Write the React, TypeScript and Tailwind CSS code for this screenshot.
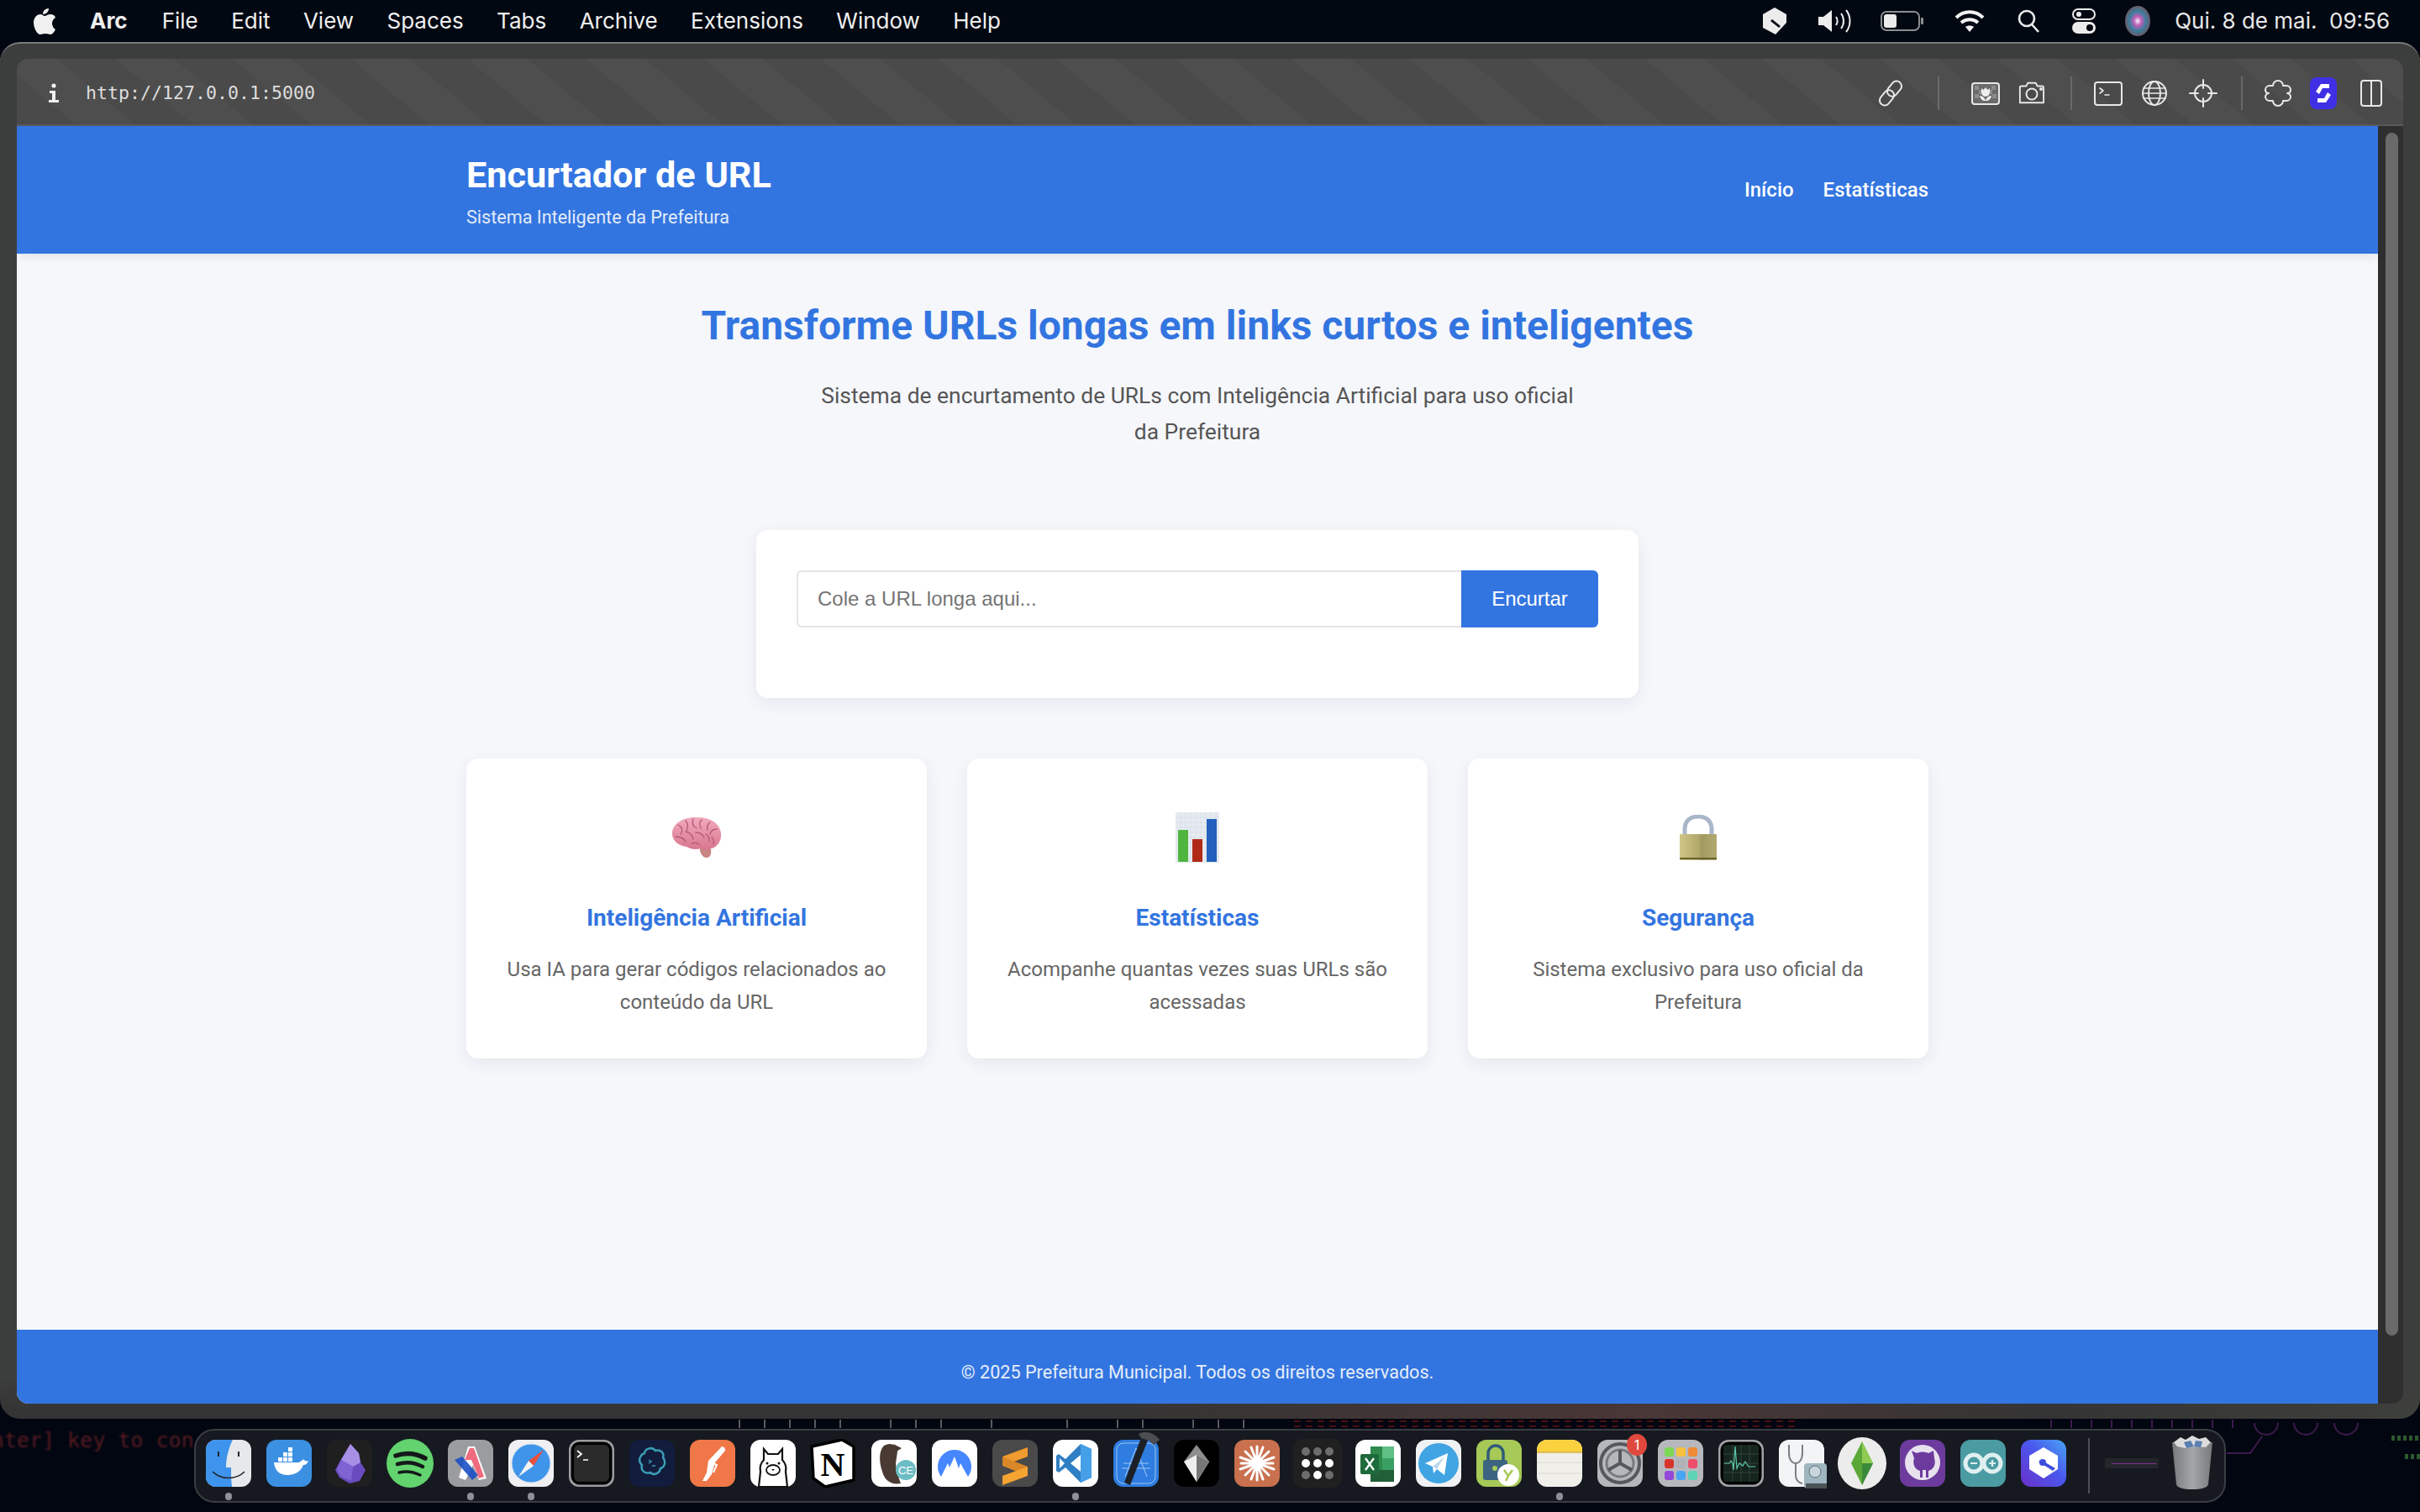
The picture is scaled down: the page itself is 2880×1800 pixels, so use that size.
import type { ReactNode } from "react";

const menuItems = ["File", "Edit", "View", "Spaces", "Tabs", "Archive", "Extensions", "Window", "Help"];

const features = [
  { title: "Inteligência Artificial", text: ["Usa IA para gerar códigos relacionados ao", "conteúdo da URL"], icon: <BrainEmoji /> },
  { title: "Estatísticas", text: ["Acompanhe quantas vezes suas URLs são", "acessadas"], icon: <ChartEmoji /> },
  { title: "Segurança", text: ["Sistema exclusivo para uso oficial da", "Prefeitura"], icon: <LockEmoji /> },
];

function BrainEmoji() {
  return (
    <svg width="60" height="50" viewBox="0 0 60 50">
      <defs>
        <linearGradient id="brainFill" x1="0" x2="0" y1="0" y2="1">
          <stop offset="0" stopColor="#f3aabd" />
          <stop offset="1" stopColor="#d8778f" />
        </linearGradient>
      </defs>
      <path d="M34 36c-1 7 3 13 8 13 4 0 6-4 5-10l-3-6z" fill="#c98484" />
      <path d="M1 22C0 10 12 1 28 1c16-1 30 6 31 19 1 11-6 18-15 19-4 1-7 0-9-1-6 2-12 1-17-2C10 35 2 30 1 22z" fill="url(#brainFill)" />
      <g fill="none" stroke="#b25a76" strokeWidth="1.3" strokeLinecap="round">
        <path d="M8 10c5 2 6 7 3 11M17 5c3 4 3 8 1 12M26 3c-2 5 0 9 4 11M36 4c-3 3-3 6-1 10M46 7c-3 2-4 5-3 9M54 15c-4 0-7 2-8 6" />
        <path d="M5 24c6 0 10 2 12 6M17 18c5 1 8 4 9 9M29 19c5 0 8 2 10 6M41 21c3 2 5 5 4 9M24 32c3-1 6-1 9 1M48 24c2 3 3 6 2 9" />
      </g>
    </svg>
  );
}

function ChartEmoji() {
  return (
    <svg width="52" height="60" viewBox="0 0 52 60">
      <rect width="52" height="60" fill="#e6ebf1" />
      <path d="M0 6H52M0 12H52M0 18H52M0 24H52M0 30H52M0 36H52M0 42H52M0 48H52M0 54H52M6 0V60M12 0V60M18 0V60M24 0V60M30 0V60M36 0V60M42 0V60M48 0V60" stroke="#d5dce5" strokeWidth="0.7" />
      <rect x="3" y="21" width="12" height="38" fill="#4fb53f" />
      <rect x="20" y="32" width="12" height="27" fill="#b12a18" />
      <rect x="37" y="8" width="12" height="51" fill="#2360bd" />
    </svg>
  );
}

function LockEmoji() {
  return (
    <svg width="44" height="54" viewBox="0 0 44 54">
      <defs>
        <linearGradient id="lockBody" x1="0" x2="1" y1="0" y2="0">
          <stop offset="0" stopColor="#cfc686" />
          <stop offset="0.5" stopColor="#b3a96d" />
          <stop offset="0.6" stopColor="#a39a62" />
          <stop offset="1" stopColor="#b2a96f" />
        </linearGradient>
      </defs>
      <path d="M6 25V17C6 7 13 2 22 2s16 5 16 15v8" fill="none" stroke="#a9b6c9" strokeWidth="5" />
      <rect y="23" width="44" height="31" rx="1" fill="url(#lockBody)" />
      <rect y="51" width="44" height="2" fill="#6c6330" />
    </svg>
  );
}

function MenuRightIcons() {
  return (
    <div className="flex items-center">
      <svg width="28" height="32" viewBox="0 0 28 32">
        <path d="M14 0l14 8v10L15 32 0 24V8z" fill="#ececec" />
        <path d="M11 14l10 8-2 2-10-8z" fill="#020812" />
      </svg>
      <svg width="40" height="28" viewBox="0 0 40 28" className="ml-[38px]" fill="none" stroke="#ececec" strokeWidth="2">
        <path d="M0 9h6l10-8v26l-10-8H0z" fill="#ececec" stroke="none" />
        <path d="M21 9c2 3 2 7 0 10M27 5c4 5 4 13 0 18M33 1c6 7 6 19 0 26" />
      </svg>
      <svg width="52" height="24" viewBox="0 0 52 24" className="ml-[34px]">
        <rect x="1" y="1" width="45" height="22" rx="6" fill="none" stroke="#8b8d91" strokeWidth="2" />
        <rect x="4" y="4" width="15" height="16" rx="3" fill="#ececec" />
        <rect x="48" y="8" width="3" height="8" rx="1" fill="#8b8d91" />
      </svg>
      <svg width="36" height="26" viewBox="0 0 36 26" className="ml-[36px]" fill="none" stroke="#f2f2f2" strokeWidth="4">
        <path d="M2 9c9-9 23-9 32 0M8 15c6-5 14-5 20 0" />
        <path d="M18 26l-5-6c3-2 7-2 10 0z" fill="#f2f2f2" stroke="none" />
      </svg>
      <svg width="26" height="28" viewBox="0 0 26 28" className="ml-[39px]" fill="none" stroke="#ececec" strokeWidth="2.6">
        <circle cx="11" cy="11" r="9" />
        <path d="M17 18l8 9" />
      </svg>
      <svg width="28" height="30" viewBox="0 0 28 30" className="ml-[39px]">
        <rect x="1" y="1" width="26" height="12" rx="6" fill="none" stroke="#ececec" strokeWidth="2" />
        <circle cx="8" cy="7" r="3" fill="#ececec" />
        <rect y="16" width="28" height="14" rx="7" fill="#ececec" />
        <circle cx="21" cy="23" r="4" fill="#020812" />
      </svg>
      <svg width="30" height="36" viewBox="0 0 30 36" className="ml-[35px]">
        <defs>
          <radialGradient id="siri">
            <stop offset="0" stopColor="#f4f2ff" />
            <stop offset="0.3" stopColor="#c05fb5" />
            <stop offset="0.65" stopColor="#3b7f9f" />
            <stop offset="1" stopColor="#6a5a68" />
          </radialGradient>
        </defs>
        <ellipse cx="15" cy="18" rx="15" ry="18" fill="url(#siri)" />
      </svg>
      <span className="ml-[29px] text-[26px] leading-none text-[#e9e9e9] font-['Inter',sans-serif] whitespace-nowrap">Qui. 8 de mai.&nbsp; 09:56</span>
    </div>
  );
}

function ToolIcon({ children, className }: { children: ReactNode; className: string }) {
  return (
    <svg width="34" height="34" viewBox="0 0 34 34" className={className} fill="none" stroke="#e8e8e8" strokeWidth="2" strokeLinecap="round" strokeLinejoin="round">
      {children}
    </svg>
  );
}

function Toolbar() {
  return (
    <div className="h-[80px] pt-[4px] flex items-center border-b-2 border-[#5a5a5a] bg-[repeating-linear-gradient(40deg,#4a4a4a_0px,#4a4a4a_45px,#4e4e4e_45px,#4e4e4e_90px)]">
      <svg width="14" height="24" viewBox="0 0 14 24" className="ml-[37px]">
        <circle cx="7" cy="3" r="2.6" fill="#f0f0f0" />
        <path d="M2 9h7v11h4v3H1v-3h4v-8H2z" fill="#f0f0f0" />
      </svg>
      <span className="ml-[31px] text-[21.6px] text-[#dddddd] font-['DejaVu_Sans_Mono',monospace] whitespace-nowrap">http://127.0.0.1:5000</span>
      <div className="ml-auto flex items-center pr-[25px]">
        <ToolIcon className="">
          <g transform="rotate(40 17 17)">
            <rect x="11" y="0" width="12" height="20" rx="6" />
            <rect x="11" y="14" width="12" height="20" rx="6" />
          </g>
        </ToolIcon>
        <div className="ml-[39px] w-[2px] h-[40px] bg-[#6a6a6a]" />
        <ToolIcon className="ml-[38px]">
          <rect x="1" y="5" width="32" height="25" rx="3" fill="#6a6a6a" />
          <path d="M4 8h5v5H4zM24 8h5v5h-5zM4 18h5v5H4zM25 18h5v5h-5zM9 13h3v5H9zM22 13h3v5h-3z" fill="#8c8c8c" stroke="none" />
          <path d="M12 11l2.5 2L17 10l2.5 3 2.5-2v5a5 5 0 0 1-10 0z" fill="#eee" stroke="none" />
          <path d="M10 20c3 0 6 2 7 6 1-4 4-6 7-6-1 4-3 6-7 6-4 0-6-2-7-6z" fill="#eee" stroke="none" />
        </ToolIcon>
        <ToolIcon className="ml-[22px]">
          <path d="M2 11a2 2 0 0 1 2-2h6l2-4h10l2 4h6a2 2 0 0 1 2 2v19H2z" transform="scale(0.94)" />
          <circle cx="16" cy="18" r="6.5" />
          <circle cx="27" cy="12" r="1" fill="#e8e8e8" />
        </ToolIcon>
        <div className="ml-[28px] w-[2px] h-[40px] bg-[#6a6a6a]" />
        <ToolIcon className="ml-[26px]">
          <rect x="1" y="4" width="32" height="27" rx="3" />
          <path d="M7 11l4 3-4 3M13 19h5" strokeWidth="1.6" />
        </ToolIcon>
        <ToolIcon className="ml-[21px]">
          <circle cx="17" cy="17" r="14" />
          <ellipse cx="17" cy="17" rx="7" ry="14" />
          <path d="M4 11h26M3 17h28M4 23h26" strokeWidth="1.5" />
        </ToolIcon>
        <ToolIcon className="ml-[24px]">
          <circle cx="17" cy="17" r="10" />
          <path d="M17 1v10M17 23v10M1 17h10M23 17h10" />
        </ToolIcon>
        <div className="ml-[28px] w-[2px] h-[40px] bg-[#6a6a6a]" />
        <ToolIcon className="ml-[25px]">
          <path d="M11 8a6 6 0 0 1 12 0h4a5 5 0 0 1 5 5c0 3-2 4-4 4 2 0 4 2 4 4a5 5 0 0 1-5 5h-4a6 6 0 0 1-12 0H7a5 5 0 0 1-5-5c0-2 2-4 4-4-2 0-4-1-4-4a5 5 0 0 1 5-5z" />
        </ToolIcon>
        <svg width="32" height="38" viewBox="0 0 32 38" className="ml-[21px]">
          <rect width="32" height="38" rx="8" fill="#3f2fe5" />
          <path d="M23 8H13L7 17l4 3 4-7h8zM9 30h10l6-9-4-3-4 7H9z" fill="#fff" />
        </svg>
        <svg width="26" height="34" viewBox="0 0 26 34" className="ml-[28px]" fill="none" stroke="#e8e8e8" strokeWidth="2">
          <rect x="1" y="2" width="24" height="30" rx="3" />
          <path d="M13 2v30" />
        </svg>
      </div>
    </div>
  );
}

function Feature({ title, text, icon }: { title: string; text: string[]; icon: ReactNode }) {
  return (
    <div className="h-[357px] rounded-[14px] bg-white shadow-[0_6px_20px_rgba(20,30,60,0.07)] flex flex-col items-center pt-[60px]">
      <div className="h-[68px] flex items-center justify-center">{icon}</div>
      <h3 className="mt-[43px] text-[28px] leading-[38px] font-bold text-[#3375e0]">{title}</h3>
      <p className="mt-[23px] text-[24px] leading-[39px] text-[#666666] text-center">
        {text[0]}
        <br />
        {text[1]}
      </p>
    </div>
  );
}

function Page() {
  return (
    <div className="w-[2810px] flex flex-col font-['Roboto',sans-serif] bg-[#f5f7fb]">
      <header className="h-[152px] bg-[#3375e0] shadow-[0_4px_12px_rgba(0,0,0,0.08)] z-10">
        <div className="w-[1740px] h-full mx-auto flex items-center justify-between">
          <div className="pt-[5px]">
            <h1 className="text-[43.2px] leading-[52px] font-bold text-white">Encurtador de URL</h1>
            <p className="mt-[9px] text-[21.6px] leading-[30px] text-[#e3ebfa]">Sistema Inteligente da Prefeitura</p>
          </div>
          <nav className="flex gap-[35px] text-[24px] font-medium text-white">
            <span>Início</span>
            <span>Estatísticas</span>
          </nav>
        </div>
      </header>
      <main className="flex-1 flex flex-col items-center">
        <h2 className="mt-[58px] text-[48px] leading-[56px] font-bold text-[#3375e0]">Transforme URLs longas em links curtos e inteligentes</h2>
        <p className="mt-[34px] text-[26.4px] leading-[43px] text-[#555555] text-center">
          Sistema de encurtamento de URLs com Inteligência Artificial para uso oficial
          <br />
          da Prefeitura
        </p>
        <div className="mt-[95px] w-[1050px] h-[200px] rounded-[14px] bg-white shadow-[0_6px_20px_rgba(20,30,60,0.07)] px-[48px] pt-[48px]">
          <div className="flex h-[68px] font-['Liberation_Sans',sans-serif]">
            <div className="flex-1 rounded-l-[6px] border-2 border-r-0 border-[#e4e4e4] flex items-center pl-[23px] text-[24px] text-[#757575]">Cole a URL longa aqui...</div>
            <button className="w-[163px] rounded-r-[6px] bg-[#3375e0] text-[24px] text-white">Encurtar</button>
          </div>
        </div>
        <div className="mt-[72px] w-[1740px] grid grid-cols-3 gap-[48px]">
          {features.map((f) => (
            <Feature key={f.title} title={f.title} text={f.text} icon={f.icon} />
          ))}
        </div>
      </main>
      <footer className="h-[88px] pt-[14px] bg-[#3375e0] flex items-center justify-center text-[21.6px] text-[#e6eefb]">© 2025 Prefeitura Municipal. Todos os direitos reservados.</footer>
    </div>
  );
}

function Tile({ children, bg = "#ffffff" }: { children?: ReactNode; bg?: string }) {
  return (
    <svg width="54" height="56" viewBox="0 0 54 56" overflow="visible">
      <rect width="54" height="56" rx="12" fill={bg} />
      {children}
    </svg>
  );
}

const dockIcons: ReactNode[] = [
  <Tile bg="#e6e8ec">
    <path d="M12 0h20c-5 10-8 22-8 33h6c0 8 0 15 1 23H12A12 12 0 0 1 0 44V12A12 12 0 0 1 12 0z" fill="#3e94ec" />
    <path d="M8 38c10 10 28 10 38 0" fill="none" stroke="#22272f" strokeWidth="1.6" />
    <path d="M15 14v6M39 14v6" stroke="#22272f" strokeWidth="2" />
  </Tile>,
  <Tile bg="#3b90e2">
    <path d="M9 27h30c2-2 4-2 5-4 1 2 4 3 6 2-1 3-3 5-6 5-3 8-10 12-19 12-9 0-15-5-16-15z" fill="#fff" />
    <path d="M14 21h5v5h-5zM20 21h5v5h-5zM26 21h5v5h-5zM20 15h5v5h-5zM26 15h5v5h-5zM26 9h5v5h-5z" fill="#fff" />
  </Tile>,
  <Tile bg="#1f1f1f">
    <path d="M28 5l10 11 2 11 6 9-7 13-12 3-12-7-5-9 7-13z" fill="#6a4cc0" />
    <path d="M28 5l10 11 2 11-9 5-14-8z" fill="#a78fe6" />
    <path d="M17 24l14 8-2 17-12-5-5-8z" fill="#7f63d2" />
  </Tile>,
  <svg width="56" height="58" viewBox="0 0 56 58">
    <ellipse cx="28" cy="29" rx="28" ry="29" fill="#62d36e" />
    <g fill="none" stroke="#15181a" strokeLinecap="round">
      <path d="M11 20c11-4 24-3 35 3" strokeWidth="5.5" />
      <path d="M13 30c10-3 21-2 30 3" strokeWidth="4.5" />
      <path d="M15 40c8-2 17-1 25 3" strokeWidth="3.5" />
    </g>
  </svg>,
  <Tile bg="#9a9ca0">
    <path d="M24 8h8l14 38-9 2-7-18-9 18-8-3z" fill="#fff" />
    <path d="M26 10h5l12 34-6 2-9-22-8 0z" fill="#f06b7f" />
    <path d="M8 24l9-4 19 22-7 6z" fill="#1a4fc4" opacity="0.9" />
  </Tile>,
  <Tile bg="#f0f0f2">
    <circle cx="27" cy="28" r="23" fill="#3f95ea" stroke="#cfe0f2" strokeWidth="1" />
    <path d="M42 12L24 25l6 6z" fill="#e8503f" />
    <path d="M12 44l18-13-6-6z" fill="#f4f4f4" />
  </Tile>,
  <Tile bg="#9b9da1">
    <rect x="2.5" y="2.5" width="49" height="51" rx="10" fill="#000" />
    <rect x="6" y="6" width="42" height="44" rx="6" fill="#2a2a2a" />
    <path d="M10 13l5 4-5 4M17 24h6" fill="none" stroke="#fff" strokeWidth="1.7" />
  </Tile>,
  <Tile bg="#121c3d">
    <path d="M18 16c1-6 9-8 13-3 6-2 11 3 9 8 4 5 2 12-3 13-1 6-8 9-12 5-6 2-12-2-10-9-5-4-3-12 3-14z" fill="none" stroke="#3a9eb5" strokeWidth="2.5" />
    <path d="M23 24l3 2-3 2M27 31h4" fill="none" stroke="#3a9eb5" strokeWidth="1.5" />
  </Tile>,
  <Tile bg="#f07747">
    <path d="M38 8a4 4 0 0 1 4 5L30 27l-4 14-6 8h-5l5-10 2-14z" fill="#fff" />
    <path d="M26 27l6 3-4 9" fill="none" stroke="#fff" strokeWidth="2" />
  </Tile>,
  <Tile>
    <path d="M16 24V11l5 6h12l5-6v13c4 4 5 9 4 14l2 18H10l2-18c-1-5 0-10 4-14z" fill="#fff" stroke="#111" strokeWidth="2.2" />
    <ellipse cx="27" cy="36" rx="8" ry="6" fill="none" stroke="#111" strokeWidth="1.8" />
    <path d="M25 35h4l-2 2z" fill="#111" />
    <circle cx="20" cy="28" r="1.5" fill="#111" />
    <circle cx="34" cy="28" r="1.5" fill="#111" />
  </Tile>,
  <svg width="56" height="58" viewBox="0 0 56 58">
    <path d="M2 9L38 1l14 8v40L18 57 4 47z" fill="#fff" stroke="#000" strokeWidth="3.5" />
    <text x="27" y="44" textAnchor="middle" fontFamily="'Liberation Serif',serif" fontWeight="700" fontSize="40" fill="#000">N</text>
  </svg>,
  <Tile>
    <path d="M14 8c8-6 17-2 17 6l-2 14c1 10 3 16 6 24-11 2-19-3-22-14-3-9-5-22 1-30z" fill="#4a3a33" />
    <path d="M26 5l10 5-6 4z" fill="#4a3a33" />
    <circle cx="41" cy="36" r="12" fill="#6cbcc4" />
    <text x="41" y="41" textAnchor="middle" fontFamily="'Liberation Sans',sans-serif" fontSize="13" fill="#fff">CE</text>
  </Tile>,
  <Tile>
    <path d="M11 44a20 20 0 1 1 32 0L34 28l-2 6-5-14-6 13-2-5z" fill="#4687ff" />
  </Tile>,
  <Tile bg="#4a4a4a">
    <path d="M42 9V20L12 31V20z" fill="#f29b2e" />
    <path d="M12 20L42 32V43L12 31z" fill="#d98727" />
    <path d="M42 32V43L12 54V43z" fill="#f6a431" />
  </Tile>,
  <Tile>
    <path d="M33 5l13 6v34l-13 6-18-18-8 6-3-2V19l3-2 8 6z" fill="#2f7fc4" />
    <path d="M33 5l13 6v34l-13 6z" fill="#46a0e8" />
    <path d="M33 18L21 28l12 10z" fill="#fff" />
    <path d="M8 22l6 6-6 6z" fill="#fff" />
  </Tile>,
  <Tile bg="#2f7de0">
    <g fill="none" stroke="#9cc8f5" strokeWidth="1">
      <rect x="4" y="4" width="46" height="48" rx="8" />
      <path d="M27 10L14 44M27 10l13 34M10 34h34M12 28h30" />
    </g>
    <path d="M34 -5l8 3-22 56-7-3z" fill="#1c2026" />
    <path d="M30 -7c8-4 18-2 25 7l-7 6-6-5-9-3z" fill="#4a4d52" />
  </Tile>,
  <Tile bg="#000000">
    <path d="M27 6l15 20-15 24-15-24z" fill="#8e8e8e" />
    <path d="M12 26l15-8 15 8-15 24z" fill="#eeeeee" />
    <path d="M27 18l15 8-15 24z" fill="#777" />
  </Tile>,
  <Tile bg="#c9704e">
    <g stroke="#fff" strokeWidth="3" strokeLinecap="round">
      <path d="M27 8v40M8 28h38M13 14l28 28M41 14L13 42M20 9l14 38M34 9L20 47M7 21l40 14M47 21L7 35" />
    </g>
  </Tile>,
  <svg width="58" height="58" viewBox="0 0 58 58">
    <rect width="58" height="58" rx="12" fill="#202020" />
    <g fill="#6d6d6d">
      <circle cx="15" cy="15" r="5" />
      <circle cx="29" cy="15" r="5" />
      <circle cx="43" cy="15" r="5" />
      <circle cx="15" cy="43" r="5" />
      <circle cx="43" cy="43" r="5" />
    </g>
    <g fill="#fff">
      <circle cx="15" cy="29" r="5" />
      <circle cx="29" cy="29" r="5" />
      <circle cx="43" cy="29" r="5" />
      <circle cx="29" cy="43" r="5" />
    </g>
  </svg>,
  <Tile>
    <path d="M18 8h28v42H18z" fill="#2f8a4e" />
    <path d="M32 8h14v14H32z" fill="#5fc083" />
    <path d="M32 22h14v14H32z" fill="#3a9f63" />
    <path d="M18 36h28v14H18z" fill="#205f38" />
    <rect x="6" y="17" width="22" height="24" rx="2" fill="#1d6b3c" />
    <path d="M12 22l10 14M22 22L12 36" stroke="#fff" strokeWidth="2.2" />
  </Tile>,
  <Tile bg="#eff1f3">
    <circle cx="27" cy="28" r="24" fill="#40a4e3" />
    <path d="M11 28l27-12-4 26-9-7-4 5-1-8z" fill="#fff" />
    <path d="M20 32l14-12-9 15z" fill="#bcd9ee" />
  </Tile>,
  <Tile bg="#a6c957">
    <path d="M14 24v-8a9 9 0 0 1 18 0v8" fill="none" stroke="#2f5a78" strokeWidth="3.5" />
    <rect x="8" y="24" width="29" height="24" rx="3" fill="#3c6480" />
    <circle cx="22" cy="34" r="3" fill="#a6c957" />
    <circle cx="38" cy="42" r="13" fill="#fff" />
    <path d="M33 36l5 7 5-7M38 43l-3 6" fill="none" stroke="#a6c957" strokeWidth="2.6" />
  </Tile>,
  <Tile bg="#f1efe9">
    <path d="M0 12A12 12 0 0 1 12 0h30a12 12 0 0 1 12 12v3H0z" fill="#fbd13f" />
    <path d="M0 15h54" stroke="#d5b24c" strokeWidth="1.5" />
    <path d="M0 27h54M0 40h54" stroke="#dcdad4" strokeWidth="1" />
  </Tile>,
  <Tile bg="#b5b8bb">
    <circle cx="27" cy="28" r="23" fill="none" stroke="#55585c" strokeWidth="4" />
    <circle cx="27" cy="28" r="16" fill="none" stroke="#777a7e" strokeWidth="3" />
    <path d="M27 28V12M27 28l-14 8M27 28l14 8" stroke="#55585c" strokeWidth="4" />
    <ellipse cx="47" cy="6" rx="12" ry="13" fill="#e0483e" />
    <text x="47" y="12" textAnchor="middle" fontFamily="'Inter',sans-serif" fontSize="16" fill="#fff">1</text>
  </Tile>,
  <Tile bg="#b6b8bd">
    {["#7cd854", "#f6c23e", "#f08a35", "#d7352a", "#b0b2b6", "#ee4f6a", "#9448d8", "#4aa5f2", "#5ed4b4"].map((c, i) => (
      <rect key={c} x={8 + (i % 3) * 14} y={9 + Math.floor(i / 3) * 14} width="11" height="11" rx="3" fill={c} />
    ))}
  </Tile>,
  <Tile bg="#a0a2a5">
    <rect x="2.5" y="2.5" width="49" height="51" rx="10" fill="#000" />
    <rect x="6" y="6" width="42" height="44" rx="4" fill="#16261f" />
    <path d="M6 17h42M6 28h42M6 39h42M17 6v44M27 6v44M37 6v44" stroke="#2f4238" strokeWidth="1" />
    <path d="M7 28h6l2-3 2 3 1 8 2-28 2 26 3-6 4 3 3-5 4 6h8" fill="none" stroke="#5fc9ae" strokeWidth="1.2" />
  </Tile>,
  <Tile bg="#f3f4f6">
    <path d="M12 6v10c0 8 4 12 8 12s8-4 8-12V6M20 28v14c0 6 3 9 8 10" fill="none" stroke="#7b7d80" strokeWidth="2" />
    <rect x="30" y="28" width="27" height="30" rx="4" fill="#9fb5bf" />
    <circle cx="43" cy="38" r="7" fill="#c7d5dc" stroke="#5e6c73" />
    <rect x="32" y="52" width="25" height="6" fill="#4c5356" />
  </Tile>,
  <svg width="58" height="62" viewBox="0 0 58 62">
    <ellipse cx="29" cy="31" rx="29" ry="31" fill="#ececec" />
    <path d="M29 5l13 26-13 26-13-26z" fill="#5ba838" />
    <path d="M29 5l13 26H29z" fill="#8fcb52" />
    <path d="M29 57l13-26H29z" fill="#3a8a3a" />
  </svg>,
  <Tile bg="#6d3b9e">
    <circle cx="27" cy="27" r="21" fill="#e8e2ef" />
    <path d="M14 13l6 3c4-2 10-2 14 0l6-3 1 9c2 6 0 13-7 15v8h-3v-9h-4v9h-3v-8c-7-2-9-9-7-15z" fill="#6d3b9e" />
    <path d="M10 35c3 3 6 4 10 4v4c-6 0-10-3-10-8z" fill="#e8e2ef" />
  </Tile>,
  <Tile bg="#4b9ba3">
    <g fill="none" stroke="#dff0f1" strokeWidth="5">
      <circle cx="16" cy="28" r="10" />
      <circle cx="38" cy="28" r="10" />
    </g>
    <path d="M12 28h8M34 28h8M38 24v8" stroke="#dff0f1" strokeWidth="2.2" />
  </Tile>,
  <svg width="54" height="56" viewBox="0 0 54 56">
    <defs>
      <linearGradient id="hexTile" x1="1" x2="0" y1="0" y2="1">
        <stop offset="0" stopColor="#4aa6f5" />
        <stop offset="0.45" stopColor="#4a58ee" />
        <stop offset="1" stopColor="#6a30c8" />
      </linearGradient>
    </defs>
    <rect width="54" height="56" rx="12" fill="url(#hexTile)" />
    <path d="M27 9l17 10v16L27 46 10 35V19z" fill="#fff" />
    <path d="M24 24l17 10-3 3-17-11z" fill="#3e4ee0" />
    <circle cx="26" cy="27" r="4" fill="#3e4ee0" />
  </svg>,
];

const runningApps = [0, 4, 5, 14, 22];

function Dock() {
  return (
    <div className="mt-[12px] ml-[231px] w-[2418px] h-[88px] rounded-[24px] border-2 border-[#3a3d42] bg-[#161a20] flex items-start pl-[3px] pt-[11px]">
      {dockIcons.map((icon, i) => (
        <div key={i} className="relative w-[72px] h-[56px] shrink-0 flex items-center justify-center">
          {icon}
          {runningApps.includes(i) && <span className="absolute left-[32px] top-[63px] w-[8px] h-[9px] rounded-full bg-[#8e9096]" />}
        </div>
      ))}
      <div className="ml-[17px] w-[2px] h-[66px] -mt-[2px] bg-[#4c4f54]" />
      <div className="ml-[18px] mt-[22px] w-[64px] h-[12px] rounded-[2px] bg-[#24262b] flex items-center pl-[8px] pr-[3px]">
        <div className="h-[1px] flex-1 bg-[#8a2f9e]" />
      </div>
      <svg width="48" height="64" viewBox="0 0 48 64" className="ml-[16px] -mt-[5px]">
        <defs>
          <linearGradient id="bin" x1="0" x2="1" y1="0" y2="0">
            <stop offset="0" stopColor="#77797b" />
            <stop offset="0.5" stopColor="#a4a6a8" />
            <stop offset="1" stopColor="#76787a" />
          </linearGradient>
        </defs>
        <path d="M0 8h48l-5 50c-1 4-8 6-19 6S6 62 5 58z" fill="url(#bin)" />
        <path d="M2 8l8-6 6 3 8-5 8 4 8-2 6 6-6 6-10-1-14 2-10-2z" fill="#dcdcdc" />
        <path d="M14 8l8-2 4 7-9 2zM28 6l8 1-2 7-8-1z" fill="#5a7fb0" />
      </svg>
    </div>
  );
}

export default function App() {
  return (
    <div className="relative w-[2880px] h-[1800px] overflow-hidden bg-[#020611]">
      <div className="absolute left-[-10px] top-[1695px] text-[25px] leading-[40px] font-['DejaVu_Sans_Mono',monospace] text-[#5c1c22] blur-[1px] whitespace-nowrap">nter] key to con</div>
      <svg className="absolute left-0 top-[1688px]" width="2880" height="112" viewBox="0 0 2880 112">
        <path d="M880 2v10M910 2v10M940 2v10M970 2v10M1000 2v10M1060 2v10M1090 2v10M1120 2v10M1180 2v10M1270 2v10M1330 2v10M1360 2v10M1420 2v10M1450 2v10M1480 2v10" stroke="#777" strokeWidth="1.5" />
        <path d="M1540 4h600M1540 10h600" stroke="#4a1010" strokeWidth="2" strokeDasharray="8 6" />
        <path d="M2440 7h220" fill="none" stroke="#3d1a4d" strokeWidth="10" strokeDasharray="2 22" />
        <path d="M2683 6a14 14 0 0 0 28 0M2730 6a14 14 0 0 0 28 0M2778 6a14 14 0 0 0 28 0M2650 42h28l14-20" fill="none" stroke="#3d1a4d" strokeWidth="2" />
        <path d="M2846 24h34M2862 46h18" stroke="#2c5a2c" strokeWidth="6" strokeDasharray="4 3" />
      </svg>
      <div className="relative flex flex-col">
        <div className="h-[50px] flex items-center bg-[#020812] pl-[40px] pr-[36px] justify-between">
          <div className="flex items-center font-['Inter',sans-serif] text-[26px] leading-none text-[#efefef]">
            <svg width="26" height="31" viewBox="0 0 26 31">
              <path d="M18 0c0 4-3 7-7 7 0-4 3-7 7-7zM13 9c2 0 4-2 7-2 3 0 5 1 6 4-3 2-4 4-4 7 0 3 2 6 4 7-2 4-4 6-6 6-2 0-3-1-6-1s-4 1-6 1c-4 0-8-8-8-14 0-6 4-10 8-10 2 0 4 2 5 2z" fill="#f0f0f0" />
            </svg>
            <span className="ml-[41px] font-bold">Arc</span>
            <div className="ml-[41px] flex gap-[39.4px]">
              {menuItems.map((item) => (
                <span key={item}>{item}</span>
              ))}
            </div>
          </div>
          <MenuRightIcons />
        </div>
        <div className="h-[1639px] rounded-[24px] border-t-2 border-[#7a7a7a] bg-[linear-gradient(180deg,#3c3d3d_97%,#3c3d3d00_99.5%),linear-gradient(90deg,#343434_45%,#4a3636_68%,#343434_85%,#3e403c_100%)] pt-[18px] pl-[20px] pr-[20px] pb-[18px]">
          <div className="h-full rounded-[14px] overflow-hidden flex flex-col">
            <Toolbar />
            <div className="flex-1 flex">
              <Page />
              <div className="flex-1 bg-[#2f2f2f] pl-[9px] pt-[8px]">
                <div className="w-[15px] h-[1432px] rounded-full bg-[#6a6a6a]" />
              </div>
            </div>
          </div>
        </div>
        <Dock />
      </div>
    </div>
  );
}
